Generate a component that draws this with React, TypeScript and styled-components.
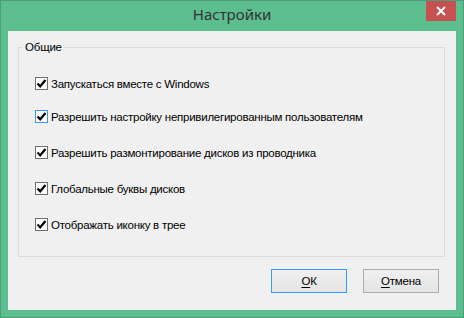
import styled, { createGlobalStyle } from 'styled-components';

const GlobalStyle = createGlobalStyle`
  html, body {
    margin: 0;
    padding: 0;
    background: #5cbd8f;
  }
  * {
    box-sizing: border-box;
  }
`;

const uiFont = `'Liberation Sans', Arial, sans-serif`;

const Window = styled.div`
  width: 464px;
  height: 318px;
  display: flex;
  flex-direction: column;
  background: #5cbd8f;
  border: 1px solid #4d9d78;
  font-family: ${uiFont};
`;

const TitleBar = styled.div`
  height: 30px;
  display: grid;
  grid-template-columns: 1fr auto;
  align-items: start;
`;

const Title = styled.div`
  grid-column: 1 / -1;
  grid-row: 1;
  text-align: center;
  font-family: 'Noto Sans', 'Open Sans', sans-serif;
  font-size: 15px;
  line-height: 26px;
  color: #333;
`;

const CloseButton = styled.button`
  grid-column: 2;
  grid-row: 1;
  width: 30px;
  height: 20px;
  margin-right: 7px;
  border: none;
  padding: 0;
  background: #c75050;
  display: flex;
  align-items: center;
  justify-content: center;
  z-index: 1;
`;

const Client = styled.div`
  flex: 1;
  margin: 0 7px 7px 7px;
  background: #f0f0f0;
  padding: 8px 11px 17px 10px;
  display: flex;
  flex-direction: column;
`;

const Group = styled.fieldset`
  margin: 0;
  padding: 0;
  border: 1px solid #dcdcdc;
  min-width: 0;
`;

const Legend = styled.legend`
  margin-left: 4px;
  padding: 0 2px;
  font-size: 11.5px;
  letter-spacing: -0.2px;
  line-height: 16px;
  color: #000;
`;

const Options = styled.div`
  display: flex;
  flex-direction: column;
  padding: 22px 0 25px 16px;
`;

const Row = styled.label<{ $space: number }>`
  display: flex;
  align-items: center;
  gap: 3px;
  height: 13px;
  margin-top: ${({ $space }) => $space}px;
  font-size: 11.5px;
  letter-spacing: -0.25px;
  color: #000;
  white-space: nowrap;
`;

const Box = styled.span<{ $hover?: boolean }>`
  width: 13px;
  height: 13px;
  flex: none;
  border: 1px solid ${({ $hover }) => ($hover ? '#3399ff' : '#707070')};
  background: #fff;
  display: flex;
  align-items: center;
  justify-content: center;
`;

const Footer = styled.div`
  margin-top: auto;
  display: flex;
  justify-content: flex-end;
  gap: 16px;
  padding-right: 6px;
`;

const Button = styled.button<{ $default?: boolean }>`
  width: 76px;
  height: 24px;
  padding: 0;
  border: 1px solid ${({ $default }) => ($default ? '#3399ff' : '#acacac')};
  background: linear-gradient(#f0f0f0, #e5e5e5);
  font-family: ${uiFont};
  font-size: 11.5px;
  letter-spacing: -0.2px;
  color: #000;
`;

const Key = styled.span`
  text-decoration: underline;
  text-underline-offset: 2px;
`;

const options = [
  { text: 'Запускаться вместе с Windows', space: 0 },
  { text: 'Разрешить настройку непривилегированным пользователям', space: 20, hover: true },
  { text: 'Разрешить размонтирование дисков из проводника', space: 23 },
  { text: 'Глобальные буквы дисков', space: 23 },
  { text: 'Отображать иконку в трее', space: 23 },
];

const Check = () => (
  <svg width="11" height="11" viewBox="0 0 11 11">
    <path d="M1.5 5.5 L4.2 8.3 L9.5 2" fill="none" stroke="#000" strokeWidth="2.2" />
  </svg>
);

export default function App() {
  return (
    <>
      <GlobalStyle />
      <Window>
        <TitleBar>
          <Title>Настройки</Title>
          <CloseButton>
            <svg width="10" height="10" viewBox="0 0 10 10">
              <path d="M1 1 L9 9 M9 1 L1 9" stroke="#fff" strokeWidth="2" />
            </svg>
          </CloseButton>
        </TitleBar>
        <Client>
          <Group>
            <Legend>Общие</Legend>
            <Options>
              {options.map((o) => (
                <Row key={o.text} $space={o.space}>
                  <Box $hover={o.hover}>
                    <Check />
                  </Box>
                  {o.text}
                </Row>
              ))}
            </Options>
          </Group>
          <Footer>
            <Button $default>
              <Key>О</Key>К
            </Button>
            <Button>
              <Key>О</Key>тмена
            </Button>
          </Footer>
        </Client>
      </Window>
    </>
  );
}
